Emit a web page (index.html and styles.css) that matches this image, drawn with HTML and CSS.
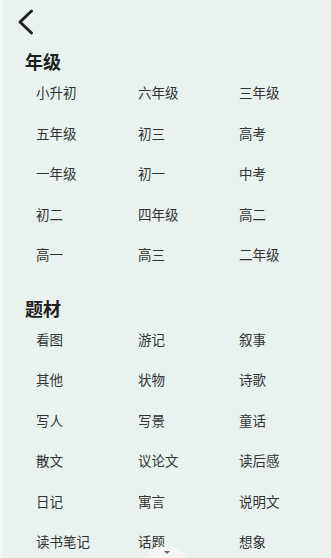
FILE: index.html
```html
<!DOCTYPE html>
<html lang="zh">
<head>
<meta charset="utf-8">
<link rel="stylesheet" href="styles.css">
</head>
<body>
<div class="page">
  <div class="header">
    <svg class="back" width="20" height="28" viewBox="0 0 20 28"><path d="M14.5 3 L3 14 L14.5 25" fill="none" stroke="#222" stroke-width="3" stroke-linecap="round" stroke-linejoin="round"/></svg>
  </div>
  <div class="title">年级</div>
  <div class="grid">
    <div class="item">小升初</div><div class="item">六年级</div><div class="item">三年级</div>
    <div class="item">五年级</div><div class="item">初三</div><div class="item">高考</div>
    <div class="item">一年级</div><div class="item">初一</div><div class="item">中考</div>
    <div class="item">初二</div><div class="item">四年级</div><div class="item">高二</div>
    <div class="item">高一</div><div class="item">高三</div><div class="item">二年级</div>
  </div>
  <div class="title title2">题材</div>
  <div class="grid">
    <div class="item">看图</div><div class="item">游记</div><div class="item">叙事</div>
    <div class="item">其他</div><div class="item">状物</div><div class="item">诗歌</div>
    <div class="item">写人</div><div class="item">写景</div><div class="item">童话</div>
    <div class="item">散文</div><div class="item">议论文</div><div class="item">读后感</div>
    <div class="item">日记</div><div class="item">寓言</div><div class="item">说明文</div>
    <div class="item">读书笔记</div><div class="item">话题</div><div class="item">想象</div>
  </div>
  <div class="handle"><span class="tri"></span></div>
</div>
</body>
</html>
```
FILE: styles.css
```css
html, body {
  margin: 0;
  padding: 0;
  height: 100%;
  overflow: hidden;
}
body {
  background: #e9f2ee;
  font-family: "Noto Sans CJK SC", "Noto Sans", sans-serif;
}
.page {
  position: relative;
  height: 558px;
  border-left: 3px solid #f3f8f6;
  border-right: 2px solid #f0f5f3;
  box-sizing: border-box;
}
.header {
  height: 48px;
  padding-left: 14px;
  padding-top: 8px;
  box-sizing: border-box;
}
.back {
  display: block;
}
.title {
  padding-left: 22px;
  font-size: 18px;
  font-weight: bold;
  line-height: 26px;
  color: #1f1f1f;
}
.title2 {
  margin-top: 18px;
}
.grid {
  display: grid;
  grid-template-columns: 102px 101px 101px;
  grid-auto-rows: 40.5px;
  padding-left: 33px;
}
.item {
  display: flex;
  align-items: center;
  padding-bottom: 4px;
  box-sizing: border-box;
  font-size: 13.5px;
  color: #333;
}
.handle {
  position: absolute;
  left: 144px;
  bottom: 0;
  width: 39px;
  height: 11px;
  background: #f3f6f5;
  clip-path: polygon(21% 0, 79% 0, 100% 100%, 0 100%);
  display: flex;
  justify-content: center;
  padding-top: 4px;
  box-sizing: border-box;
}
.tri {
  width: 0;
  height: 0;
  border-left: 3px solid transparent;
  border-right: 3px solid transparent;
  border-top: 3px solid #666;
}
```
